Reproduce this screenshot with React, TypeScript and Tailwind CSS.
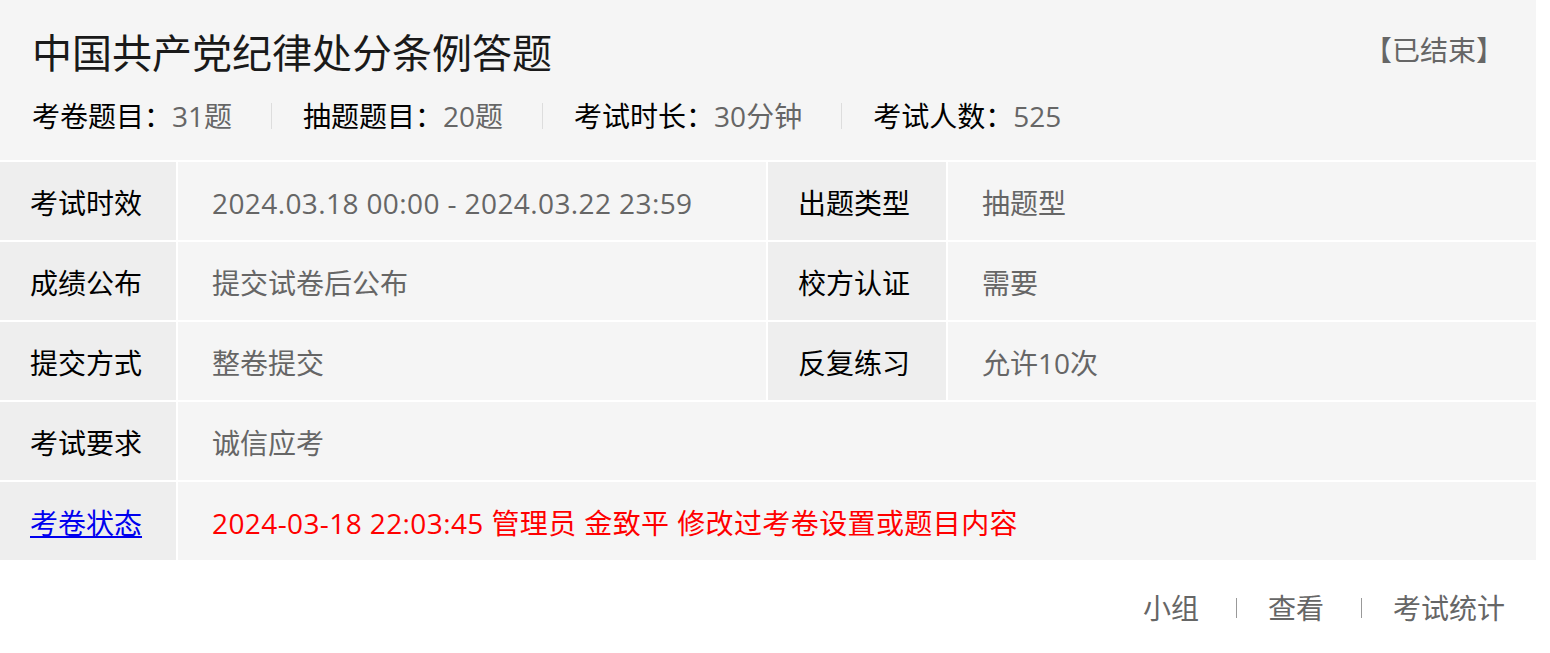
import React from 'react'

const FONT = { fontFamily: '"Open Sans", "Noto Sans CJK SC", "Noto Sans", sans-serif' }

const stats = [
  { label: '考卷题目：', value: '31题' },
  { label: '抽题题目：', value: '20题' },
  { label: '考试时长：', value: '30分钟' },
  { label: '考试人数：', value: '525' },
]

function Label({ children }: { children: React.ReactNode }) {
  return (
    <div className="flex items-center bg-[#eeeeee] pt-[4px] pl-[30px] text-[28px] text-black">
      {children}
    </div>
  )
}

function Value({ children, wide }: { children: React.ReactNode; wide?: boolean }) {
  return (
    <div className={`flex items-center bg-[#f5f5f5] pt-[4px] pl-[34px] text-[28px] text-[#666666] ${wide ? 'col-span-3' : ''}`}>
      {children}
    </div>
  )
}

export default function App() {
  return (
    <div className="w-[1536px] bg-white" style={FONT}>
      {/* Header */}
      <div className="flex flex-col bg-[#f5f5f5] px-[32px] pt-[29px] pb-[24px]">
        <div className="flex items-center justify-between">
          <h1 className="text-[40px] leading-[48px] text-[#1a1a1a]">中国共产党纪律处分条例答题</h1>
          <span className="-mt-[6px] text-[28px] leading-[48px] text-[#666666]">【已结束】</span>
        </div>
        <div className="mt-[19px] flex items-center text-[28px] leading-[40px]">
          {stats.map((s, i) => (
            <div key={s.label} className="flex items-center">
              {i > 0 && <span className="mr-[31px] h-[26px] w-px bg-[#dddddd]" />}
              <span className={`text-black ${i < stats.length - 1 ? 'mr-[39px]' : ''}`}>
                {s.label}
                <span className="text-[#666666]">{s.value}</span>
              </span>
            </div>
          ))}
        </div>
      </div>

      {/* Info table */}
      <div className="mt-[2px] grid grid-cols-[176px_588px_178px_1fr] auto-rows-[78px] gap-[2px] bg-white">
        <Label>考试时效</Label>
        <Value>
          <span className="tracking-[0.4px]">2024.03.18 00:00 - 2024.03.22 23:59</span>
        </Value>
        <Label>出题类型</Label>
        <Value>抽题型</Value>

        <Label>成绩公布</Label>
        <Value>提交试卷后公布</Value>
        <Label>校方认证</Label>
        <Value>需要</Value>

        <Label>提交方式</Label>
        <Value>整卷提交</Value>
        <Label>反复练习</Label>
        <Value>允许10次</Value>

        <Label>考试要求</Label>
        <Value wide>诚信应考</Value>

        <Label>
          <a href="#" className="text-[#0000ee] underline">考卷状态</a>
        </Label>
        <Value wide>
          <span className="tracking-[0.4px] text-[#ff0000]">2024-03-18 22:03:45 管理员 金致平 修改过考卷设置或题目内容</span>
        </Value>
      </div>

      {/* Footer links */}
      <div className="flex items-center justify-end pt-[28px] pr-[31px] text-[28px] leading-[40px] text-[#666666]">
        <span>小组</span>
        <span className="ml-[37px] mr-[31px] h-[20px] w-px bg-[#999999]" />
        <span>查看</span>
        <span className="ml-[37px] mr-[31px] h-[20px] w-px bg-[#999999]" />
        <span>考试统计</span>
      </div>
    </div>
  )
}
